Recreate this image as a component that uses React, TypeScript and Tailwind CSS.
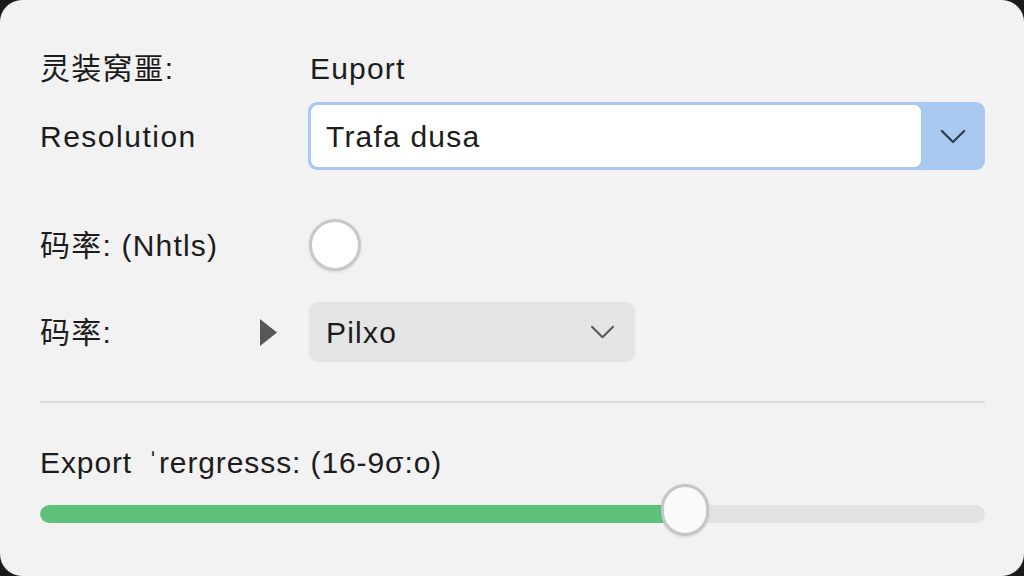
const font = { fontFamily: '"Liberation Sans", Arial, "Noto Sans CJK SC", sans-serif' };

const Chevron = ({ className }: { className: string }) => (
  <svg viewBox="0 0 28 16" className={className} fill="none" stroke="currentColor" strokeWidth="2.4" strokeLinecap="round" strokeLinejoin="round">
    <path d="M2 2 L14 14 L26 2" />
  </svg>
);

const App = () => {
  const progress = 620;

  return (
    <div className="w-[1024px] h-[576px] bg-[#1a1a1a]" style={font}>
      <div className="w-full h-full rounded-[22px] bg-[#f2f2f2] pt-[48px] pl-[40px] pr-[39px] text-[#1c1c1c] text-[30px] tracking-[0.04em]">
        <div className="flex items-center h-[40px]">
          <div className="w-[268px]">灵装窝噩:</div>
          <div className="pl-[2px]">Euport</div>
        </div>

        <div className="flex items-center h-[68px] mt-[14px]">
          <div className="w-[268px] tracking-[0.05em]">Resolution</div>
          <div className="flex-1 h-full flex rounded-[9px] bg-[#a9c9f2] p-[3px] pr-0">
            <div className="flex-1 bg-white rounded-[7px] flex items-center pl-[15px]">Trafa dusa</div>
            <div className="w-[64px] flex items-center justify-center text-[#303c4c]">
              <Chevron className="w-[26px] h-[15px]" />
            </div>
          </div>
        </div>

        <div className="flex items-center h-[52px] mt-[49px]">
          <div className="w-[269px]">码率: (Nhtls)</div>
          <div className="w-[52px] h-[52px] rounded-full bg-white border-[3px] border-[#c8c8c8] shadow-sm" />
        </div>

        <div className="flex items-center h-[60px] mt-[31px]">
          <div className="w-[269px] flex items-center justify-between pr-[32px]">
            <span>码率:</span>
            <svg viewBox="0 0 17 27" className="w-[17px] h-[27px]">
              <polygon points="0,0 17,13.5 0,27" fill="#585858" />
            </svg>
          </div>
          <div className="w-[326px] h-full rounded-[9px] bg-[#e5e5e5] flex items-center justify-between pl-[17px] pr-[20px]">
            <span>Pilxo</span>
            <Chevron className="w-[25px] h-[14px] text-[#5a5a5a]" />
          </div>
        </div>

        <div className="h-[2px] bg-[#dedede] mt-[39px]" />

        <div className="flex items-center h-[40px] mt-[39px] tracking-[0.03em]">
          <span>Export{'\u2002'}ˈrergresss: (16-9σ:o)</span>
        </div>

        <div className="relative h-[52px] mt-[6px] flex items-center">
          <div className="w-full h-[18px] rounded-full bg-[#e3e3e3] overflow-hidden">
            <div className="h-full bg-[#5ec27a] rounded-l-full" style={{ width: progress + 20 }} />
          </div>
          <div
            className="absolute top-[-4px] w-[48px] h-[52px] rounded-full bg-[#fafafa] border-[3px] border-[#c6c6c6] shadow-sm"
            style={{ left: progress + 1 }}
          />
        </div>
      </div>
    </div>
  );
};

export default App;
